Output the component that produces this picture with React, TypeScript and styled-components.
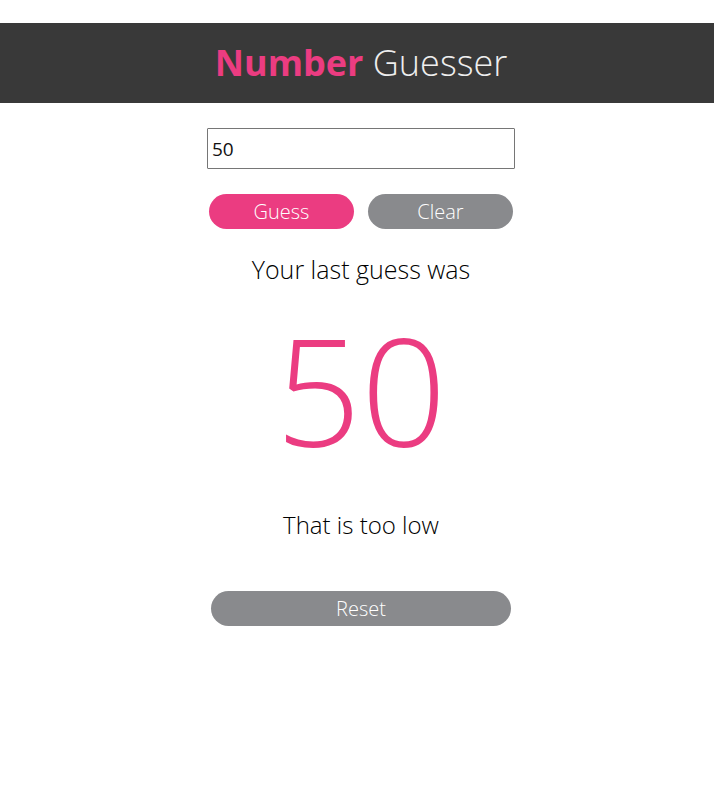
import React, { useState } from "react";
import styled, { createGlobalStyle } from "styled-components";

const GlobalStyle = createGlobalStyle`
  html, body {
    margin: 0;
    padding: 0;
    background: #ffffff;
    font-family: "Open Sans", "Noto Sans", sans-serif;
  }
`;

const Page = styled.div`
  display: flex;
  flex-direction: column;
  padding-top: 23px;
`;

const Header = styled.header`
  height: 80px;
  background: #393939;
  display: flex;
  align-items: center;
  justify-content: center;
  padding-left: 8px;
`;

const Title = styled.h1`
  margin: 0;
  font-size: 36px;
  font-weight: 300;
  color: #eeeeee;
  line-height: 1;
`;

const Accent = styled.span`
  color: #eb3c81;
  font-weight: 700;
`;

const Main = styled.main`
  display: flex;
  flex-direction: column;
  align-items: center;
  padding-left: 8px;
  padding-top: 25px;
`;

const Input = styled.input`
  box-sizing: border-box;
  width: 308px;
  height: 41px;
  border: 1px solid #767676;
  border-radius: 1px;
  padding: 0 4px;
  font-family: "Open Sans", sans-serif;
  font-size: 19px;
  font-weight: 400;
  color: #111;
  outline: none;
`;

const ButtonRow = styled.div`
  display: flex;
  gap: 14px;
  margin-top: 25px;
`;

const Pill = styled.button<{ $tone: "pink" | "gray"; $width: number }>`
  width: ${(p) => p.$width}px;
  height: 35px;
  border: none;
  border-radius: 18px;
  background: ${(p) => (p.$tone === "pink" ? "#eb3c81" : "#898a8d")};
  color: #ffffff;
  font-family: "Open Sans", sans-serif;
  font-size: 20px;
  font-weight: 300;
  padding: 0;
  cursor: pointer;
`;

const Label = styled.p<{ $size: number }>`
  margin: 0;
  font-size: ${(p) => p.$size}px;
  font-weight: 300;
  color: #000;
  line-height: 1.4;
`;

const BigNumber = styled.div`
  font-size: 150px;
  font-weight: 300;
  color: #eb3c81;
  line-height: 1;
`;

const Stack = styled.div<{ $top: number }>`
  margin-top: ${(p) => p.$top}px;
  display: flex;
  justify-content: center;
`;

export default function App() {
  const [value, setValue] = useState("50");
  return (
    <Page>
      <GlobalStyle />
      <Header>
        <Title>
          <Accent>Number</Accent> Guesser
        </Title>
      </Header>
      <Main>
        <Input value={value} onChange={(e) => setValue(e.target.value)} />
        <ButtonRow>
          <Pill $tone="pink" $width={145}>Guess</Pill>
          <Pill $tone="gray" $width={145} onClick={() => setValue("")}>Clear</Pill>
        </ButtonRow>
        <Stack $top={23}>
          <Label $size={25}>Your last guess was</Label>
        </Stack>
        <Stack $top={27}>
          <BigNumber>50</BigNumber>
        </Stack>
        <Stack $top={44}>
          <Label $size={24}>That is too low</Label>
        </Stack>
        <Stack $top={49}>
          <Pill $tone="gray" $width={300}>Reset</Pill>
        </Stack>
      </Main>
    </Page>
  );
}
